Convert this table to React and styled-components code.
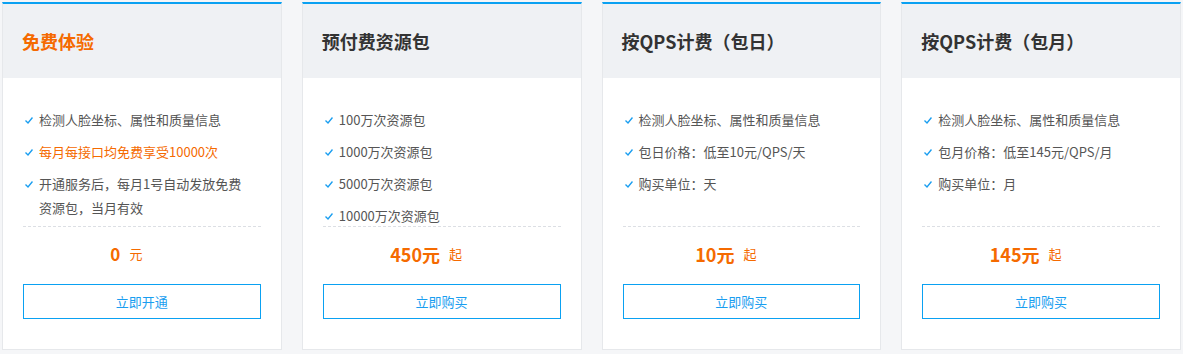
import React from 'react';
import styled, { createGlobalStyle } from 'styled-components';

const GlobalStyle = createGlobalStyle`
    html, body {
        margin: 0;
        padding: 0;
        background: #f5f6f8;
        font-family: "Noto Sans CJK SC", "Noto Sans", sans-serif;
    }
`

const Wrap = styled.div`
    display: flex;
    gap: 20px;
    padding: 2px;
`

const Card = styled.div`
    width: 280px;
    height: 348px;
    box-sizing: border-box;
    background: #fff;
    border: 1px solid #e6e8eb;
    border-top: 2px solid #0aa1f2;
    display: flex;
    flex-direction: column;
`

const Header = styled.div`
    height: 74px;
    background: #eff1f4;
    display: flex;
    align-items: center;
    padding: 0 19px;
    font-size: 18px;
    font-weight: bold;
    color: ${props => props.free ? '#f56a00' : '#333'};
`

const Body = styled.div`
    padding: 30px 20px 0;
`

const List = styled.ul`
    list-style: none;
    margin: 0;
    padding: 0;
    height: 118px;
`

const Item = styled.li`
    display: flex;
    font-size: 13px;
    line-height: 24px;
    padding-right: 14px;
    color: ${props => props.hot ? '#f56a00' : '#555'};
    margin-bottom: 8px;
`

const Check = styled.svg`
    flex: none;
    width: 8px;
    height: 24px;
    margin: 0 6px 0 2px;
`

const Divider = styled.div`
    border-top: 1px dashed #dcdfe4;
`

const Price = styled.div`
    height: 53px;
    padding: 0 31px 4px 0;
    display: flex;
    align-items: center;
    justify-content: center;
    color: #f56a00;
`

const Amount = styled.span`
    font-size: ${props => props.small ? '17px' : '18px'};
    font-weight: bold;
    margin-right: 9px;
`

const Unit = styled.span`
    font-size: 13px;
`

const Button = styled.button`
    display: block;
    width: 100%;
    height: 35px;
    box-sizing: border-box;
    border: 1px solid #0aa1f2;
    background: #fff;
    color: #1a9ef0;
    font-family: inherit;
    font-size: 13px;
    cursor: pointer;
`

const plans = [
    {
        title: '免费体验',
        free: true,
        items: [
            { text: '检测人脸坐标、属性和质量信息' },
            { text: '每月每接口均免费享受10000次', hot: true },
            { text: '开通服务后，每月1号自动发放免费资源包，当月有效' }
        ],
        amount: '0',
        unit: '元',
        button: '立即开通'
    },
    {
        title: '预付费资源包',
        items: [
            { text: '100万次资源包' },
            { text: '1000万次资源包' },
            { text: '5000万次资源包' },
            { text: '10000万次资源包' }
        ],
        amount: '450元',
        unit: '起',
        button: '立即购买'
    },
    {
        title: '按QPS计费（包日）',
        items: [
            { text: '检测人脸坐标、属性和质量信息' },
            { text: '包日价格：低至10元/QPS/天' },
            { text: '购买单位：天' }
        ],
        amount: '10元',
        unit: '起',
        button: '立即购买'
    },
    {
        title: '按QPS计费（包月）',
        items: [
            { text: '检测人脸坐标、属性和质量信息' },
            { text: '包月价格：低至145元/QPS/月' },
            { text: '购买单位：月' }
        ],
        amount: '145元',
        unit: '起',
        button: '立即购买'
    }
];

const Tick = () => (
    <Check viewBox="0 0 8 24">
        <path d="M0.5 12.5 L3 15 L7.5 9.5" fill="none" stroke="#1a9ef0" strokeWidth="1.4" />
    </Check>
);

export default function App() {
    return (
        <Wrap>
            <GlobalStyle />
            {plans.map(plan => (
                <Card key={plan.title}>
                    <Header free={plan.free}>{plan.title}</Header>
                    <Body>
                        <List>
                            {plan.items.map(item => (
                                <Item key={item.text} hot={item.hot}>
                                    <Tick />
                                    <span>{item.text}</span>
                                </Item>
                            ))}
                        </List>
                        <Divider />
                        <Price>
                            <Amount small={plan.free}>{plan.amount}</Amount>
                            <Unit>{plan.unit}</Unit>
                        </Price>
                        <Button>{plan.button}</Button>
                    </Body>
                </Card>
            ))}
        </Wrap>
    );
}
